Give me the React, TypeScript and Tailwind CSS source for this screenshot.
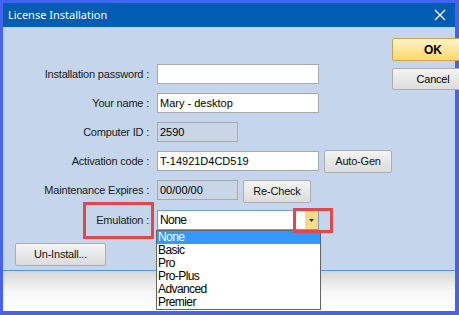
import React from "react";

const font = { fontFamily: '"Liberation Sans", Arial, sans-serif' };

function Label({ children }: { children: React.ReactNode }) {
  return (
    <div className="w-[147px] shrink-0 pr-[1px] text-right text-[11px] leading-[20px] tracking-[-0.2px] text-[#1a1a1a]">
      {children}
    </div>
  );
}

function Btn({ children, w = "w-[68px]", h = "h-[23px]" }: { children: React.ReactNode; w?: string; h?: string }) {
  return (
    <div
      className={`${w} ${h} flex items-center justify-center rounded-[2px] border border-[#adadad] bg-gradient-to-b from-[#f4f4f4] to-[#dcdcdc] text-[11px] tracking-[-0.2px] text-[#111]`}
    >
      {children}
    </div>
  );
}

export default function App() {
  const items = ["None", "Basic", "Pro", "Pro-Plus", "Advanced", "Premier"];
  return (
    <div
      className="relative w-[459px] h-[315px] bg-[#4563f2] pl-[3px] pt-[3px] pr-[4px] pb-[4px] overflow-hidden"
      style={font}
    >
      <div className="flex h-full flex-col">
        {/* Title bar */}
        <div className="flex h-[24px] items-center justify-between bg-[#005db2] pl-[5px] pr-[9px]">
          <span
            className="text-[11px] text-white"
            style={{ fontFamily: '"Noto Sans", "Open Sans", sans-serif' }}
          >
            License Installation
          </span>
          <svg width="12" height="12" viewBox="0 0 12 12">
            <path d="M1 1 L11 11 M11 1 L1 11" stroke="white" strokeWidth="1.3" />
          </svg>
        </div>

        {/* Body */}
        <div className="flex h-[243px] bg-[#c5d6ec]">
          <div className="flex flex-1 flex-col pt-[37px]">
            <div className="flex flex-col gap-[9px]">
              <div className="flex h-[20px] items-start gap-[7px]">
                <Label>Installation password :</Label>
                <div className="h-[20px] w-[162px] border border-[#a9a9a9] bg-white" />
              </div>
              <div className="flex h-[20px] items-start gap-[7px]">
                <Label>Your name :</Label>
                <div className="h-[20px] w-[162px] border border-[#a9a9a9] bg-white pl-[2px] text-[11px] leading-[18px] text-black">
                  Mary - desktop
                </div>
              </div>
              <div className="flex h-[20px] items-start gap-[7px]">
                <Label>Computer ID :</Label>
                <div className="h-[20px] w-[81px] border border-[#a9a9a9] bg-[#c9d6e6] pl-[2px] text-[11px] leading-[18px] text-black">
                  2590
                </div>
              </div>
              <div className="flex h-[20px] items-start gap-[7px]">
                <Label>Activation code :</Label>
                <div className="h-[20px] w-[162px] border border-[#a9a9a9] bg-white pl-[2px] text-[11px] leading-[18px] text-black">
                  T-14921D4CD519
                </div>
                <div className="ml-[-2px] mt-[-1px]">
                  <Btn>Auto-Gen</Btn>
                </div>
              </div>
              <div className="flex h-[20px] items-start gap-[7px]">
                <Label>Maintenance Expires :</Label>
                <div className="h-[20px] w-[81px] border border-[#a9a9a9] bg-[#c9d6e6] pl-[2px] text-[11px] leading-[18px] text-black">
                  00/00/00
                </div>
                <div className="ml-[-2px]">
                  <Btn>Re-Check</Btn>
                </div>
              </div>
              <div className="flex h-[20px] items-start gap-[7px] mt-[1px]">
                <Label>Emulation :</Label>
                <div className="flex h-[20px] w-[162px] border border-[#7a9cc9] bg-white">
                  <div className="flex-1 pl-[2px] text-[12px] leading-[18px] tracking-[-0.6px] text-black">None</div>
                  <div className="flex w-[13px] items-center justify-center bg-[#f6dc86]">
                    <svg width="5" height="3" viewBox="0 0 5 3">
                      <path d="M0 0 H5 L2.5 3 Z" fill="#333" />
                    </svg>
                  </div>
                </div>
              </div>
            </div>
            <div className="mt-[13px] pl-[12px]">
              <Btn w="w-[91px]">Un-Install...</Btn>
            </div>
          </div>
          <div className="flex w-[92px] flex-col gap-[7px] pt-[11px]">
            <div className="flex h-[23px] w-[82px] items-center justify-center rounded-[2px] border border-[#c9a552] bg-gradient-to-b from-[#fff4c8] to-[#fcd867] text-[12px] font-bold text-black">
              OK
            </div>
            <div className="flex h-[22px] w-[82px] items-center justify-center rounded-[2px] border border-[#adadad] bg-gradient-to-b from-[#f4f4f4] to-[#dcdcdc] text-[11px] tracking-[-0.2px] text-black">
              Cancel
            </div>
          </div>
        </div>

        {/* Footer */}
        <div className="h-px bg-[#5c8fd6]" />
        <div className="flex-1 bg-gradient-to-b from-[#d6d6d6] via-[#f6f6f6] to-white" />
      </div>

      {/* Dropdown list overlay */}
      <div className="absolute left-[156px] top-[230px] w-[165px] h-[80px] border border-[#646464] bg-white">
        {items.map((it, i) => (
          <div
            key={it}
            className={`h-[13px] pl-[1px] text-[12px] leading-[13px] tracking-[-0.6px] ${
              i === 0 ? "bg-[#3399ff] text-white" : "text-black"
            }`}
          >
            {it}
          </div>
        ))}
      </div>

      {/* Red highlight boxes */}
      <div className="absolute left-[83px] top-[202px] w-[71px] h-[37px] border-[3px] border-[#e0484c]" />
      <div className="absolute left-[293px] top-[208px] w-[40px] h-[25px] border-[3px] border-[#e0484c]" />
    </div>
  );
}
